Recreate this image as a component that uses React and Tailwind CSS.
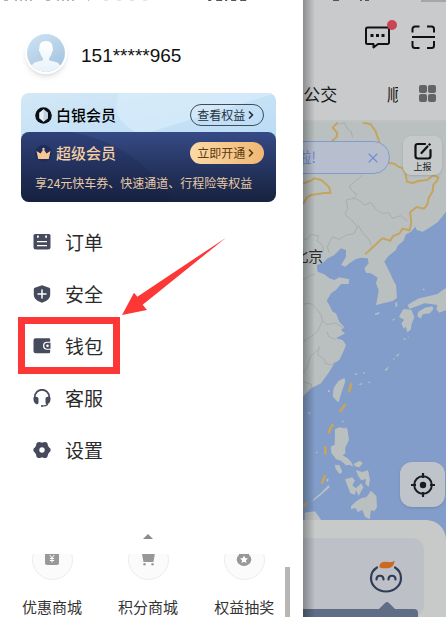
import { ChevronRight, X } from 'lucide-react';

const MENU = [
  { id: 'orders', label: '订单', Icon: OrderIcon },
  { id: 'safety', label: '安全', Icon: ShieldIcon },
  { id: 'wallet', label: '钱包', Icon: WalletIcon, marked: true },
  { id: 'service', label: '客服', Icon: HeadsetIcon },
  { id: 'settings', label: '设置', Icon: GearIcon },
];

const SHORTCUTS = [
  { id: 'coupon', label: '优惠商城', Icon: CouponIcon },
  { id: 'points', label: '积分商城', Icon: CartIcon },
  { id: 'lottery', label: '权益抽奖', Icon: MedalIcon },
];

function OrderIcon() {
  return (
    <svg className="size-[18px]" viewBox="0 0 18 18" aria-hidden="true">
      <path fill="#454b5c" d="M2 1h14a1.500 1.500 0 0 1 1.500 1.500V14a2.500 2.500 0 0 1-2.500 2.500H3A2.500 2.500 0 0 1 .5 14V2.500A1.500 1.500 0 0 1 2 1z" />
      <path stroke="#fff" strokeWidth="1.200" d="M4 8.600h10M4 12.600h10" />
      <path fill="#fff" d="M4 2.500h1.800v2.200H4zM12.200 2.500H14v2.200h-1.800z" />
    </svg>
  );
}

function ShieldIcon() {
  return (
    <svg className="size-[18px]" viewBox="0 0 18 18" aria-hidden="true">
      <path fill="#454b5c" d="M9 .2l7.200 2.500c.6.200 1 .6 1 1.300v5.600c0 4-3.200 6.600-8.200 8.200C4 16.200.8 13.600.8 9.600V4c0-.7.4-1.100 1-1.300z" />
      <path stroke="#fff" strokeWidth="1.500" strokeLinecap="round" d="M9 5v8M5 9h8" />
    </svg>
  );
}

function WalletIcon() {
  return (
    <svg className="size-[18px]" viewBox="0 0 18 18" aria-hidden="true">
      <path fill="#454b5c" d="M2.500 1.200h13.700a1 1 0 0 1 1 1v2.600H14a4 4 0 0 0 0 8h3.200v2a1.500 1.500 0 0 1-1.500 1.500H3A2.500 2.500 0 0 1 .5 13.800V3.200a2 2 0 0 1 2-2z" />
      <path fill="#454b5c" d="M14.300 5.800h3.200v6h-3.200a3 3 0 0 1 0-6z" />
      <circle cx="14.500" cy="8.800" r="1.300" fill="#fff" />
    </svg>
  );
}

function HeadsetIcon() {
  return (
    <svg className="size-[18px]" viewBox="0 0 18 18" fill="none" aria-hidden="true">
      <path stroke="#454b5c" strokeWidth="1.800" d="M1.800 10V8a7.200 7.200 0 0 1 14.400 0v2" />
      <path fill="#454b5c" d="M.5 8.500c2.500-1.200 5-.8 5 1.500v3.500c0 1.800-1.500 2-2.500 1.500C1 14 .3 12 .5 8.500zM17.500 8.500c-2.500-1.200-5-.8-5 1.500v3.500c0 1.800 1.500 2 2.500 1.500 2-1 2.700-3 2.500-6.500z" />
      <path stroke="#454b5c" strokeWidth="1.200" strokeLinecap="round" d="M14.500 15.500c-1 1-2.500 1.400-5 1.500" />
      <circle cx="9" cy="16.900" r="1" fill="#454b5c" />
    </svg>
  );
}

function GearIcon() {
  return (
    <svg className="size-[18px]" viewBox="0 0 18 18" aria-hidden="true">
      <g fill="#454b5c">
        <circle cx="9" cy="9" r="7.500" />
        <circle cx="3.200" cy="9" r="2.800" />
        <circle cx="14.800" cy="9" r="2.800" />
        <circle cx="6.100" cy="3.700" r="2.800" />
        <circle cx="11.900" cy="3.700" r="2.800" />
        <circle cx="6.100" cy="14.300" r="2.800" />
        <circle cx="11.900" cy="14.300" r="2.800" />
      </g>
      <circle cx="9" cy="9" r="2.700" fill="#fff" />
    </svg>
  );
}

function CouponIcon() {
  return (
    <svg className="size-4" viewBox="0 0 16 16" aria-hidden="true">
      <rect x="1" y="1" width="14" height="14" rx="2" fill="#989898" />
      <path stroke="#fff" strokeWidth="1" fill="none" d="M5.800 5L8 8l2.200-3M8 8v4.500M5.800 8.500h4.400M5.800 10.500h4.400" />
    </svg>
  );
}

function CartIcon() {
  return (
    <svg className="size-4" viewBox="0 0 16 16" aria-hidden="true">
      <path fill="#989898" d="M0 1h2.500l.6 2H15l-1.500 9h-10L1.800 3H0z" />
      <circle cx="4.500" cy="14.300" r="1.200" fill="#989898" />
      <circle cx="12.500" cy="14.300" r="1.200" fill="#989898" />
    </svg>
  );
}

function MedalIcon() {
  return (
    <svg className="size-4" viewBox="0 0 16 16" aria-hidden="true">
      <path fill="#989898" d="M3 0h10v6H3z" />
      <ellipse cx="8" cy="9.500" rx="7.300" ry="6.500" fill="#989898" />
      <path fill="#fff" d="M8 5.500l1.200 2.600 2.800.3-2.100 1.900.6 2.800L8 11.700l-2.500 1.400.6-2.800L4 8.400l2.800-.3z" />
    </svg>
  );
}

function Avatar() {
  return (
    <svg className="size-[42px] rounded-full border-2 border-white shadow-md" viewBox="0 0 38 38" aria-hidden="true">
      <defs>
        <linearGradient id="sky" x1="0" y1="0" x2="0.600" y2="1">
          <stop offset="0" stopColor="#cfe4f4" />
          <stop offset="1" stopColor="#a6c4e0" />
        </linearGradient>
        <linearGradient id="person" x1="0" y1="0" x2="0" y2="1">
          <stop offset="0" stopColor="#fff" />
          <stop offset="1" stopColor="#e9f2fa" />
        </linearGradient>
      </defs>
      <rect width="38" height="38" fill="url(#sky)" />
      <path fill="url(#person)" d="M19 7c5 0 7 3 6.600 7.500 1 .5.500 3-.6 3.500-.5 3-2 5-3 6.500-.5 2 1 2.500 5 3 4 .5 6 2.500 6.500 5.500V38H4.500v-5c.5-3 2.500-5 6.500-5.500 4-.5 5.500-1 5-3-1-1.500-2.500-3.500-3-6.500-1.100-.5-1.600-3-.6-3.500C12 10 14 7 19 7z" />
    </svg>
  );
}

function StatusBar() {
  return (
    <svg className="h-0.5 w-full" viewBox="0 0 303 2" preserveAspectRatio="none" aria-hidden="true">
      <path stroke="#9a9a9a" strokeWidth="1.600" strokeDasharray="4 7 2 3 2 3 2 3 2 14" d="M4 0h85" />
      <path stroke="#ccc" strokeWidth="1" strokeDasharray="4 9" d="M104 0h50" />
      <path stroke="#555" strokeWidth="2" d="M208 0h3M216 0h6M225 0h2M231 0h5M240 0h6" />
    </svg>
  );
}

function Membership() {
  return (
    <section className="mt-[19px] mr-[27px] ml-[21px]">
      <div className="relative flex h-[50px] items-start justify-between overflow-hidden rounded-t-lg bg-gradient-to-br from-[#d3e8f6] to-[#b9dbf6] pt-[11px] pr-3 pl-3.5">
        <svg className="absolute inset-0 h-full w-full" viewBox="0 0 255 50" preserveAspectRatio="none" aria-hidden="true">
          <path fill="#dceefb" fillOpacity=".6" d="M98 0h157L120 42C94 30 92 14 98 0z" />
        </svg>
        <h2 className="relative flex h-[22px] items-center gap-1 text-[15px] font-medium text-black">
          <svg className="size-[17px]" viewBox="0 0 17 17" aria-hidden="true">
            <circle cx="8.500" cy="8.500" r="8.300" fill="#0b0f14" />
            <path fill="#e4f0f8" d="M8.500 2.200l4.300 3.500v5.600l-4.300 3.500-4.300-3.500V5.700z" />
            <path fill="#c3d3df" d="M8.500 2.200l4.300 3.500v5.600l-4.300 3.500z" />
          </svg>
          白银会员
        </h2>
        <button type="button" className="relative flex h-[22px] items-center rounded-full border border-[#3f4d59] px-1.5 text-[12px] text-[#27313a]">
          查看权益
          <ChevronRight className="size-3" strokeWidth={3.5} />
        </button>
      </div>
      <div className="relative -mt-[11px] h-[70px] overflow-hidden rounded-lg bg-gradient-to-b from-[#364a86] to-[#17223f] pt-2.5 pr-3 pl-3.5">
        <svg className="absolute inset-0 h-full w-full" viewBox="0 0 255 71" preserveAspectRatio="none" aria-hidden="true">
          <path fill="#131f45" fillOpacity=".2" d="M0 0h50c50 10 80 35 101 71H0z" />
        </svg>
        <div className="relative flex items-center justify-between">
          <h2 className="flex items-center gap-1 text-[15px] font-medium text-[#f4cfa2]">
            <svg className="size-[17px]" viewBox="0 0 17 17" aria-hidden="true">
              <circle cx="8.500" cy="8.500" r="8.500" fill="#1d2c5c" />
              <path fill="#f6c791" d="M1.500 6l4 2.500 3-4.500 3 4.500 4-2.500-1.700 8H3.200z" />
              <circle cx="8.500" cy="4" r="1.200" fill="#f6c791" />
            </svg>
            超级会员
          </h2>
          <button type="button" className="flex h-[22px] items-center rounded-full bg-gradient-to-r from-[#fbd9a6] to-[#efb873] px-[7px] text-[12px] text-[#5c3a12]">
            立即开通
            <ChevronRight className="size-3" strokeWidth={3.5} />
          </button>
        </div>
        <p className="relative mt-2.5 text-[12px] leading-4 whitespace-nowrap text-[#e8caa6]">享24元快车券、快速通道、行程险等权益</p>
      </div>
    </section>
  );
}

function MenuItem({ item }) {
  const { label, Icon, marked } = item;
  return (
    <li className="relative">
      <a href={`#${item.id}`} className="flex h-[52px] items-center gap-3.5 pl-[33px] text-[19px] text-[#2b2b2b]">
        <Icon />
        {label}
      </a>
      {marked && <span className="absolute -top-[3px] -bottom-0.5 left-[18px] w-[102px] border-7 border-[#fd3636]" />}
    </li>
  );
}

function Drawer() {
  return (
    <aside className="relative flex w-[68%] shrink-0 flex-col bg-white">
      <StatusBar />
      <div className="mt-[30px] flex items-center gap-3.5 pl-[25px]">
        <Avatar />
        <p className="pt-1.5 font-['Liberation_Sans'] text-[19px] text-[#111]">151*****965</p>
      </div>
      <Membership />
      <nav className="relative mt-3.5">
        <ul>
          {MENU.map((item) => <MenuItem key={item.id} item={item} />)}
        </ul>
        <svg className="pointer-events-none absolute top-5 left-[122px] h-[79px] w-[105px]" viewBox="366 60 315 237" aria-hidden="true">
          <path fill="#fd3636" d="M366 297l36-67 10 12L678 65 428 266l13 16z" />
        </svg>
      </nav>
      <section className="mt-auto pt-4 pr-[11px] pl-1">
        <svg className="mx-auto h-[5px] w-2.5" viewBox="0 0 10 5" aria-hidden="true">
          <path fill="#8c8c8c" d="M5 0l5 5H0z" />
        </svg>
        <ul className="mt-[15px] grid grid-cols-3">
          {SHORTCUTS.map(({ id, label, Icon }) => (
            <li key={id}>
              <a href={`#${id}`} className="flex flex-col items-center text-[15px] leading-5 text-[#333]">
                <span className="flex h-[26px] items-end overflow-hidden">
                  <span className="flex size-[41px] shrink-0 items-center justify-center rounded-full border border-[#ececec] bg-[#fbfbfb] pb-1">
                    <Icon />
                  </span>
                </span>
                <span className="mt-[17px]">{label}</span>
              </a>
            </li>
          ))}
        </ul>
      </section>
      <span className="absolute right-[13px] bottom-0 h-[50px] w-[5px] bg-[#b6b6b6]" />
    </aside>
  );
}

function ChinaMap() {
  return (
    <svg className="absolute inset-0 h-full w-full" viewBox="21 21 429 1194" preserveAspectRatio="xMinYMin slice" aria-hidden="true">
      <rect x="21" y="21" width="900" height="1500" fill="#829dc9" />
      <path
        fill="#bac0c0"
        d="M21 21H450V290L436 308 425 322 400 338 380 350 362 345 358 335 345 350 330 358 322 378 305 392 300 405 275 425 265 440 275 460 284 478 290 492 300 510 303 548 290 558 262 565 240 570 245 545 248 525 240 505 245 488 225 475 210 473 205 460 218 445 215 430 195 428 180 432 160 445 148 455 135 450 150 425 150 405 135 400 115 420 95 430 80 445 62 450 65 470 85 478 100 490 115 495 130 487 160 493 158 507 135 507 120 525 105 535 92 557 100 570 110 590 120 595 130 620 145 637 135 645 147 655 120 670 140 675 150 690 140 715 130 735 115 745 100 770 75 805 45 820 21 845z"
      />
      <g fill="none" stroke="#a3aaab" strokeWidth="2.500" strokeLinejoin="round">
        <path d="M130 28l15-5 10 20 10 5 5 20M200 180l-18 15-22 18 8 15 15 10-8 12-25 5 5 25-8 18 22 20 15 18-10 20-25 5-20 12-20-8-15 30 5 18M170 248l20 8 15 14 20-8 15 22 22 12 15-4 12 18 25-8 20 16M186 330l15 25 18 20 8 18M21 375l15-5 10-12 22 5-5 15 15 10 5 20" />
        <path d="M21 567l22-2 18 15 15 20 3 20-15 30-20 15-23 15M81 617l12 12 25-5 25 15M93 650l5 15 20 8M70 695l-5 25 18 10 5 15 20 5 10-10M70 700l-28 25-8 30-13 20M21 800l25 8v15M21 495l25-15 12-2" />
      </g>
      <g fill="none" stroke="#c5a460" strokeWidth="6" strokeLinejoin="round" strokeLinecap="round">
        <path d="M124 24l-14 14 14 16-2 12-14 12M203 24l20 3 15 20 12 35M280 144l15 2 10 8 15 5 8 15 5 26 18 4 15-6 28-3 18-14 15 6-5 12-10 10-2 20-12 20-4 20-10 12-22-5-20 16 4 30-5 24-22-5-8 14-20 8-8 14-24-7-25 24-25 22M21 206l22-8 12-8 22 6 22 20 5 18-20 0-38 6-12 6-12 20" />
      </g>
      <g fill="#bac0c0" transform="translate(0 465)">
        <path d="M145 324l3 10-12 35-8 28-5-3-13-15 3-25 15-22z" />
        <path d="M335 105L350 95 370 85 400 78 425 72 440 60 450 55 450 120 430 128 421 118 424 105 405 102 385 100 365 108 340 116z" />
        <path d="M367 125l20-12 22-4 3 8-10 13-22 3-6 13-10-8zM312 135l10-18 24 2 9 22-8 20-3 18-10 8-5-18-5 8-8-16 8-12-15-8zM236 131l14-5v5l-12 4zM298 100l5-5 1 12-5 5zM288 150l10-6-6 8zM335 203l5-6-3 8zM323 205h5v4h-5zM300 256l12-6-8 10zM290 268l6-4v5zM265 300l16-12-10 14zM178 310h5v5h-5zM202 306h4v5h-4zM186 343l14-4-4 6zM217 335h5v4h-5zM96 360h5v6h-5zM34 425l10 3-2 6zM381 56h4v5h-4z" />
      </g>
      <g fill="#bac0c0" transform="translate(0 915)">
        <path d="M117 28L130 22 154 26 159 60 148 82 148 100 140 106 155 115 165 125 172 140 160 134 150 136 135 122 120 118 106 98 104 80 116 74zM116 134l15 2 8 20-8 6-12-15zM160 120l12 12 8-4 12-6 8 8-10 12-10-2zM147 178l22-6 8 10-8 14 12 10-4 18-14-4-6-16zM180 150l18 6 18-5 6 28-4 22-10-10 2-14-14 4-10-14zM178 206l18-16 6 12-14 26zM165 258l18-16 14-8 14-2 14-20 16 16 2 34-8 12-10-4-4 28-14-8-8-20-14 6-6-12-14 4zM50 240l25-22 22-22 5 5-28 25-22 16zM26 278l30-4 10 12 12 18H26zM90 180l8-6-2 12zM60 95h4v5h-4zM136 5l5-3 5 5zM147 22h5v4z" />
      </g>
      <g stroke="#c5a460" strokeWidth="8" strokeLinecap="round">
        <path d="M165 807l-5 22M147 870l-14 18M109 930l-11 22M88 996v20M86 1083l-7 20M30 1167l-8 8" />
      </g>
    </svg>
  );
}

function MapPage() {
  return (
    <main className="relative flex min-w-0 flex-1 flex-col overflow-hidden bg-[#829dc9]">
      <header className="flex h-[122px] flex-col border-b-2 border-[#bfc2c3] bg-[#c9cacb]">
        <svg className="h-0.5 w-[143px]" viewBox="0 0 143 2" aria-hidden="true">
          <path stroke="#555" strokeWidth="2" d="M30 0h6M57 0h2M62 0h4" />
          <path stroke="#a5a6a7" strokeWidth="2" d="M118 1h25" />
        </svg>
        <div className="mt-[22px] flex justify-end gap-5 pr-2.5">
          <button type="button" aria-label="消息" className="relative">
            <svg className="size-[26px]" viewBox="0 0 26 26" fill="none" aria-hidden="true">
              <path stroke="#111" strokeWidth="2" strokeLinejoin="round" d="M3.500 3.500h20a1.500 1.500 0 0 1 1.500 1.500v13.500a1.500 1.500 0 0 1-1.500 1.500H14l-4.500 3.500V20h-6A1.500 1.500 0 0 1 2 18.500V5a1.500 1.500 0 0 1 1.500-1.500z" />
              <path fill="#111" d="M6.500 10h3v3h-3zM12 10h3v3h-3zM17.500 10h3v3h-3z" />
            </svg>
            <span className="absolute -top-1 -right-[7px] size-2.5 rounded-full bg-[#cb4453]" />
          </button>
          <button type="button" aria-label="扫一扫">
            <svg className="size-[26px]" viewBox="0 0 26 26" fill="none" aria-hidden="true">
              <path stroke="#111" strokeWidth="2" d="M2.500 8.500V5a2.500 2.500 0 0 1 2.500-2.500h4.500M17 2.500h4.500A2.500 2.500 0 0 1 24 5v3.500M2.500 17v4.500A2.500 2.500 0 0 0 5 24h4.500M17 24h4.500a2.500 2.500 0 0 0 2.500-2.500V17M2 13h23" />
            </svg>
          </button>
        </div>
        <div className="mt-[31px] flex items-center text-[17px] text-[#1b1b1b]">
          <a href="#bus" className="whitespace-nowrap">公交</a>
          <a href="#ride" className="mr-[21px] ml-auto w-[11px] overflow-hidden">顺</a>
          <button type="button" aria-label="更多" className="mr-2.5 grid grid-cols-2 gap-px">
            <span className="size-2 rounded-xs bg-[#626564]" />
            <span className="size-2 rounded-xs bg-[#626564]" />
            <span className="size-2 rounded-xs bg-[#626564]" />
            <span className="size-2 rounded-xs bg-[#626564]" />
          </button>
        </div>
      </header>
      <div className="relative flex-1">
        <ChinaMap />
        <span className="absolute top-[123px] -left-[10px] text-[15px] whitespace-nowrap text-[#2a2d2e]">北京</span>
        <div className="absolute top-[19px] right-14 -left-5 flex h-[33px] items-center justify-between rounded-full border border-[#7f9ad0] bg-[#b7bfcf] pr-2 pl-3 text-[15px] text-[#6f8ed0]">
          啦!
          <button type="button" aria-label="关闭"><X className="size-4" strokeWidth={1.7} /></button>
        </div>
        <button type="button" className="absolute top-3.5 right-1 flex h-[39px] w-[39px] flex-col items-center rounded-lg bg-[#c5c9c9] pt-[5px] text-[9px] leading-3 text-[#1b1b1b] shadow-sm">
          <svg className="size-5" viewBox="0 0 20 20" fill="none" aria-hidden="true">
            <path stroke="#111" strokeWidth="2.200" strokeLinecap="round" d="M12 3H4.500A2 2 0 0 0 2.500 5v10a2.500 2.500 0 0 0 2.500 2.500h10a2.500 2.500 0 0 0 2.500-2.500V9M8.500 12l6-6.500" />
            <path stroke="#111" strokeWidth="2.200" d="M15.800 4.200l1.500-1.500" />
          </svg>
          上报
        </button>
        <button type="button" aria-label="定位" className="absolute right-px bottom-[13px] flex size-[45px] items-center justify-center rounded-xl bg-[#bfc3ca] shadow-sm">
          <svg className="size-6" viewBox="0 0 24 24" fill="none" aria-hidden="true">
            <circle cx="12" cy="12" r="8.800" stroke="#1a1d20" strokeWidth="2" />
            <circle cx="12" cy="12" r="3.200" fill="#1a1d20" />
            <path stroke="#1a1d20" strokeWidth="2.200" d="M12 0v5M12 19v5M0 12h5M19 12h5" />
          </svg>
        </button>
      </div>
      <section className="relative h-[97px] rounded-tr-[20px] bg-[#c8caca] pt-[18px] pr-[22px]">
        <div className="relative h-[79px] rounded-r-xl bg-[#bdc0c7]">
          <svg className="absolute top-[21px] right-5 h-[36px] w-[36px]" viewBox="0 0 36 36" fill="none" aria-hidden="true">
            <path stroke="#2f3c58" strokeWidth="2.200" strokeLinecap="round" d="M9 8.500C5 11 3 15 3 19c0 8 7 13.500 15 13.500S33 27 33 19c0-4-2-8-6-10.500" />
            <path stroke="#2f3c58" strokeWidth="2.200" strokeLinecap="round" d="M8.500 20.500c0-5 7-5 7 0M20.500 20.500c0-5 7-5 7 0" />
            <path fill="#c96a20" d="M11.500 8.500C11 3 16 2.500 20 3c3 .4 5 0 6.500-1.500C26.500 6 24 8.800 20 9.200c-3 .2-6 .2-8.500-.7z" />
          </svg>
        </div>
        <div className="absolute right-7 bottom-0 left-0 h-2 rounded-tr bg-[#5f6d86]">
          <svg className="absolute -top-[7px] right-[23px] h-[7px] w-4" viewBox="0 0 16 7" aria-hidden="true">
            <path fill="#5f6d86" d="M0 7l6-6q2-2 4 0l6 6z" />
          </svg>
        </div>
      </section>
      <div className="pointer-events-none absolute inset-y-0 left-0 w-3 bg-gradient-to-r from-black/30 to-transparent" />
    </main>
  );
}

export default function App() {
  return (
    <div className="flex min-h-screen overflow-hidden bg-white font-['Noto_Sans_CJK_SC',sans-serif]">
      <Drawer />
      <MapPage />
    </div>
  );
}
